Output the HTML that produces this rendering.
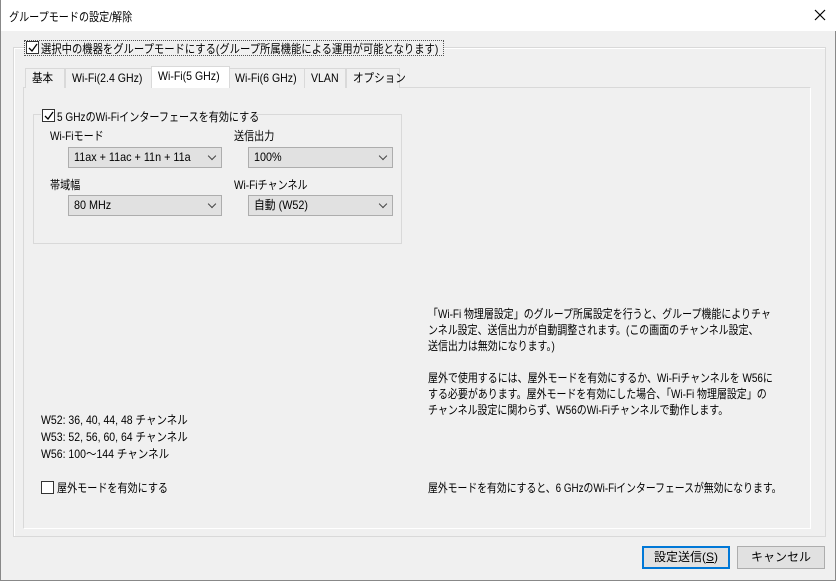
<!DOCTYPE html>
<html><head><meta charset="utf-8"><style>
*{margin:0;padding:0;box-sizing:border-box}
body{width:836px;height:581px;background:#f0f0f0;font-family:"Liberation Sans","Noto Sans CJK JP",sans-serif;font-size:12px;color:#000;position:relative;overflow:hidden;border-left:1px solid #888;border-right:1px solid #888;border-bottom:1px solid #888}
.a{position:absolute;white-space:nowrap}
.n{transform:scaleX(.84);transform-origin:0 0}
.title{left:0;top:0;width:836px;height:31px;background:#fff}
.cb{width:13px;height:13px;border:1px solid #333;background:#fff;display:inline-block;position:absolute}
.cb svg{position:absolute;left:0;top:0}
.tab{top:68px;height:20px;border:1px solid #d9d9d9;border-bottom:none;background:#f0f0f0;line-height:19px;padding-left:6px}
.tab span{display:inline-block;transform:scaleX(.88);transform-origin:0 0}
.sel{height:22px;top:66px;background:#fff;border-color:#d9d9d9}
.combo{height:21px;border:1px solid #adadad;background:#e1e1e1;padding-left:5px;line-height:19px}
.combo span{display:inline-block;transform:scaleX(.9);transform-origin:0 0}
.combo:after{content:"";position:absolute;right:6px;top:5px;width:5px;height:5px;border-right:1px solid #444;border-bottom:1px solid #444;transform:rotate(45deg)}
.btn{height:23px;border:1px solid #adadad;background:#e1e1e1;text-align:center;line-height:21px}
</style></head><body>
<div class="a title"></div>
<div class="a n" style="left:8px;top:8px">グループモードの設定/解除</div>
<svg class="a" style="left:813px;top:9px" width="12" height="12"><path d="M1 1L11 11M11 1L1 11" stroke="#000" stroke-width="1.2"/></svg>
<div class="a" style="left:12px;top:47px;width:813px;height:490px;border:1px solid #d9d9d9;box-shadow:inset 1px 1px 0 #fff"></div>
<div class="a" style="left:23px;top:40px;width:420px;height:16px;background:#f0f0f0;border:1px dotted #555"></div>
<span class="cb" style="left:25px;top:41px"><svg width="12" height="12"><path d="M2 6L5 9L10 2" stroke="#000" fill="none" stroke-width="1.3"/></svg></span>
<div class="a" style="left:40px;top:40px;transform:scaleX(.86);transform-origin:0 0">選択中の機器をグループモードにする(グループ所属機能による運用が可能となります)</div>
<div class="a" style="left:22px;top:87px;width:788px;height:442px;border:1px solid #d9d9d9;border-right-color:#fff;border-bottom-color:#fff;background:#f0f0f0"></div>
<div class="a tab" style="left:24px;width:40px"><span>基本</span></div>
<div class="a tab" style="left:64px;width:87px"><span>Wi-Fi(2.4 GHz)</span></div>
<div class="a tab" style="left:227px;width:77px"><span>Wi-Fi(6 GHz)</span></div>
<div class="a tab" style="left:303px;width:42px"><span>VLAN</span></div>
<div class="a tab" style="left:345px;width:54px"><span>オプション</span></div>
<div class="a tab sel" style="left:150px;width:79px"><span>Wi-Fi(5 GHz)</span></div>
<div class="a" style="left:32px;top:114px;width:369px;height:130px;border:1px solid #d9d9d9"></div>
<div class="a" style="left:40px;top:108px;width:212px;height:14px;background:#f0f0f0"></div>
<span class="cb" style="left:41px;top:109px"><svg width="12" height="12"><path d="M2 6L5 9L10 2" stroke="#000" fill="none" stroke-width="1.3"/></svg></span>
<div class="a n" style="left:56px;top:108px">5 GHzのWi-Fiインターフェースを有効にする</div>
<div class="a n" style="left:49px;top:127px">Wi-Fiモード</div>
<div class="a n" style="left:233px;top:127px">送信出力</div>
<div class="a combo" style="left:67px;top:147px;width:154px"><span>11ax + 11ac + 11n + 11a</span></div>
<div class="a combo" style="left:247px;top:147px;width:145px"><span>100%</span></div>
<div class="a n" style="left:49px;top:176px">帯域幅</div>
<div class="a n" style="left:233px;top:176px">Wi-Fiチャンネル</div>
<div class="a combo" style="left:67px;top:195px;width:154px"><span>80 MHz</span></div>
<div class="a combo" style="left:247px;top:195px;width:145px"><span>自動 (W52)</span></div>
<div class="a n" style="left:427px;top:306px;line-height:16px;transform:scaleX(.83)">「Wi-Fi 物理層設定」のグループ所属設定を行うと、グループ機能によりチャ<br>ンネル設定、送信出力が自動調整されます。(この画面のチャンネル設定、<br>送信出力は無効になります。)</div>
<div class="a n" style="left:427px;top:370px;line-height:16px;transform:scaleX(.83)">屋外で使用するには、屋外モードを有効にするか、Wi-Fiチャンネルを W56に<br>する必要があります。屋外モードを有効にした場合、「Wi-Fi 物理層設定」の<br>チャンネル設定に関わらず、W56のWi-Fiチャンネルで動作します。</div>
<div class="a n" style="left:427px;top:479px;transform:scaleX(.82)">屋外モードを有効にすると、6 GHzのWi-Fiインターフェースが無効になります。</div>
<div class="a" style="left:40px;top:412px;line-height:17px;transform:scaleX(.875);transform-origin:0 0">W52: 36, 40, 44, 48 チャンネル<br>W53: 52, 56, 60, 64 チャンネル<br>W56: 100～144 チャンネル</div>
<span class="cb" style="left:40px;top:481px"></span>
<div class="a n" style="left:56px;top:479px">屋外モードを有効にする</div>
<div class="a btn" style="left:641px;top:546px;width:88px;border:2px solid #0078d7;line-height:19px">設定送信(<u>S</u>)</div>
<div class="a btn" style="left:736px;top:546px;width:88px">キャンセル</div>
</body></html>
